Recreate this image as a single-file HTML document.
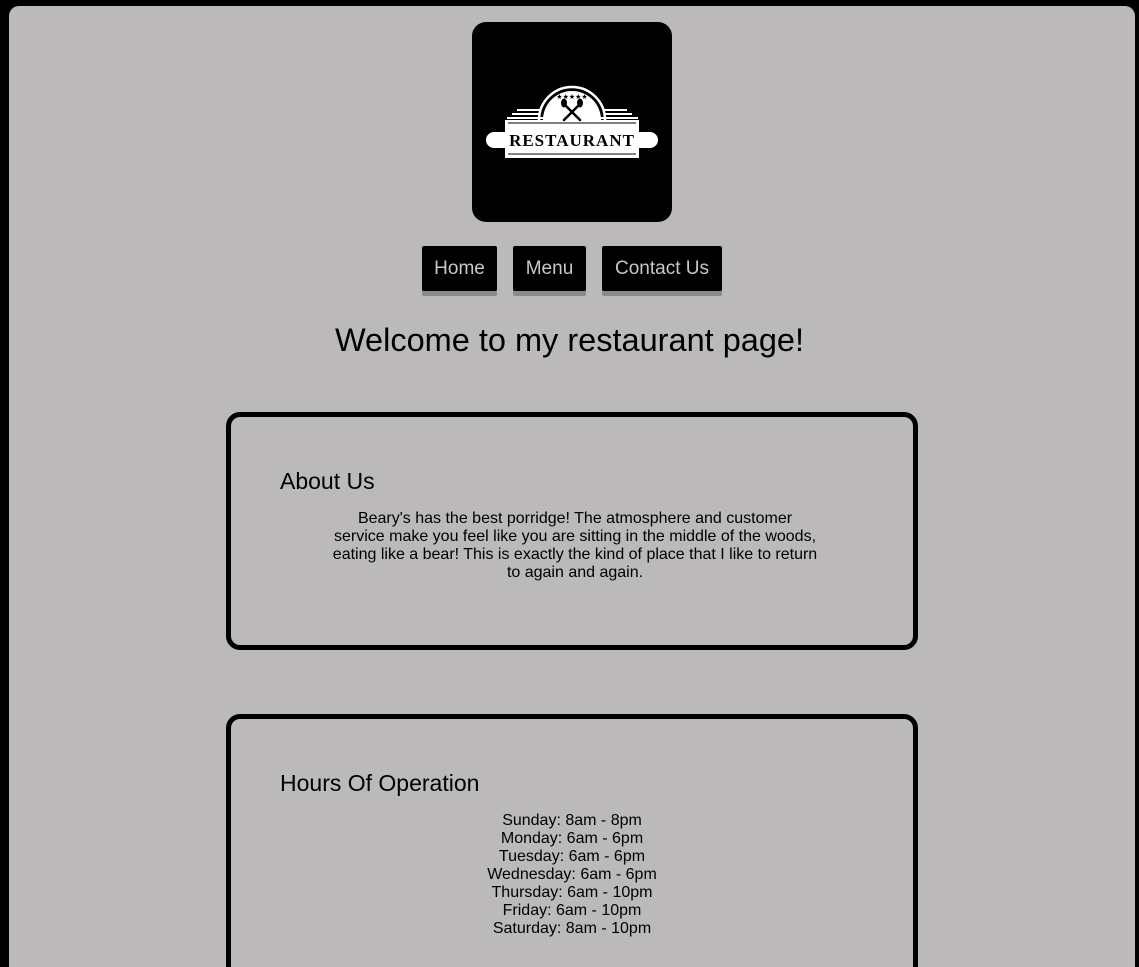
<!DOCTYPE html>
<html><head><style>
html,body{margin:0;padding:0;background:#000;width:1139px;height:967px;overflow:hidden;font-family:"Liberation Sans",sans-serif;}
.wrap{position:relative;width:1139px;height:967px;overflow:hidden;background:#000;}
.page{position:absolute;left:9px;top:6px;width:1126px;height:1200px;background:#bbb9ba;border-radius:10px;}
.logo{position:absolute;left:472px;top:22px;width:200px;height:200px;background:#000;border-radius:14px;}
.btn{position:absolute;top:246px;height:45px;background:#000;color:#c8c8c8;font-size:19px;line-height:46px;text-align:center;border-radius:2px;box-shadow:0 5px 0 #8a8a8a;}
h1{position:absolute;left:0;width:1139px;top:322px;margin:0;font-weight:normal;font-size:32.5px;text-align:center;color:#000;}
.card{position:absolute;left:226px;width:682px;border:5px solid #000;border-radius:14px;}
.card h2{position:absolute;left:49px;margin:0;font-weight:normal;font-size:23px;}
.card p{position:absolute;margin:0;font-size:16px;line-height:18px;text-align:center;white-space:nowrap;}
</style></head><body><div class="wrap">
<div class="page"></div>
<div class="logo">
<svg width="200" height="200" viewBox="0 0 200 200">
 <path d="M67 98 A33 33 0 0 1 133 98" fill="none" stroke="#fff" stroke-width="2.5"/>
 <path d="M71 98 A29 29 0 0 1 129 98 Z" fill="#fff"/>
 <g stroke="#fff" stroke-width="2">
  <line x1="45" y1="88" x2="68" y2="88"/><line x1="132" y1="88" x2="155" y2="88"/>
  <line x1="40" y1="92" x2="68" y2="92"/><line x1="132" y1="92" x2="160" y2="92"/>
  <line x1="35" y1="96" x2="166" y2="96"/>
 </g>
 <path d="M33 98 H167 V110 H178 A6 6 0 0 1 178 126 H167 V136 H33 V126 H22 A6 6 0 0 1 22 110 H33 Z" fill="#fff"/>
 <line x1="36" y1="101" x2="164" y2="101" stroke="#000" stroke-width="1"/>
 <line x1="36" y1="132" x2="164" y2="132" stroke="#000" stroke-width="1"/>
 <text x="100" y="124" text-anchor="middle" font-family="Liberation Serif,serif" font-weight="bold" font-size="17" letter-spacing="1" fill="#000">RESTAURANT</text>
 <g stroke="#000" stroke-width="2.5" stroke-linecap="round">
  <line x1="92" y1="82" x2="108" y2="98"/><line x1="108" y1="82" x2="92" y2="98"/>
 </g>
 <ellipse cx="92" cy="81" rx="3" ry="4.5" fill="#000"/><ellipse cx="108" cy="81" rx="3" ry="4.5" fill="#000"/>
 <text x="100" y="77" text-anchor="middle" font-size="7" fill="#000">★★★★★</text>
</svg>
</div>
<div class="btn" style="left:422px;width:75px">Home</div>
<div class="btn" style="left:513px;width:73px">Menu</div>
<div class="btn" style="left:602px;width:120px">Contact Us</div>
<h1>Welcome to my restaurant page!</h1>
<div class="card" style="top:412px;height:228px">
 <h2 style="top:51px">About Us</h2>
 <p style="left:97px;width:494px;top:93px">Beary's has the best porridge! The atmosphere and customer<br>service make you feel like you are sitting in the middle of the woods,<br>eating like a bear! This is exactly the kind of place that I like to return<br>to again and again.</p>
</div>
<div class="card" style="top:714px;height:300px">
 <h2 style="top:51px">Hours Of Operation</h2>
 <p style="left:0;width:682px;top:93px">Sunday: 8am - 8pm<br>Monday: 6am - 6pm<br>Tuesday: 6am - 6pm<br>Wednesday: 6am - 6pm<br>Thursday: 6am - 10pm<br>Friday: 6am - 10pm<br>Saturday: 8am - 10pm</p>
</div>
</div></body></html>
